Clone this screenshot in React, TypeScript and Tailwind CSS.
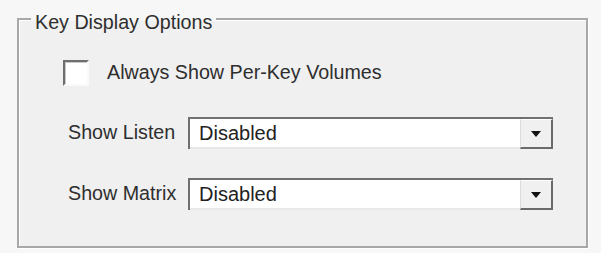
const font = { fontFamily: '"Liberation Sans", Arial, sans-serif' };

const Combo = ({ value }: { value: string }) => (
  <div className="flex h-[32px] w-[365px] border-t-2 border-l-2 border-[#707070] bg-white">
    <div className="flex flex-1 items-center border-b-2 border-[#e8e8e8] pl-[9px] text-[20px] leading-none text-[#222]">
      {value}
    </div>
    <div className="flex w-[33px] items-center justify-center border-t border-l border-r-2 border-b-2 border-t-white border-l-[#dcdcdc] border-r-[#6a6a6a] border-b-[#6a6a6a] bg-[#f0f0f0]">
      <svg width="10" height="6" viewBox="0 0 10 6">
        <path d="M0 0 H10 L5 6 Z" fill="#111" />
      </svg>
    </div>
  </div>
);

const Row = ({ label, value, className }: { label: string; value: string; className: string }) => (
  <div className={`flex items-center pl-[49px] ${className}`}>
    <span className="w-[120px] text-[19.7px] leading-none text-[#2e2e2e]">{label}</span>
    <Combo value={value} />
  </div>
);

export default function App() {
  return (
    <div className="h-[253px] w-[601px] bg-[#f7f7f7] pt-[18px] pl-[17px]" style={font}>
      <div className="relative h-[230px] w-[571px] border-2 border-[#a8a8a8] bg-[#f0f0f0] pt-[40px] shadow-[inset_1px_1px_0_#fff,1px_1px_0_#fff]">
        <div className="absolute top-[-8px] left-[12px] bg-[linear-gradient(to_bottom,#f7f7f7_45%,#f0f0f0_45%)] px-[4px] text-[19.7px] leading-[20px] text-[#2e2e2e]">
          Key Display Options
        </div>

        <label className="flex h-[26px] items-center gap-[18px] pl-[44px]">
          <span className="h-[26px] w-[26px] border-t-2 border-l-2 border-r-2 border-b-2 border-t-[#6e6e6e] border-l-[#6e6e6e] border-r-[#fafafa] border-b-[#fafafa] bg-white shadow-[inset_1px_1px_0_#c8c8c8]" />
          <span className="text-[19.7px] leading-none text-[#2e2e2e]">Always Show Per-Key Volumes</span>
        </label>

        <Row label="Show Listen" value="Disabled" className="mt-[31px]" />
        <Row label="Show Matrix" value="Disabled" className="mt-[29px]" />
      </div>
    </div>
  );
}
